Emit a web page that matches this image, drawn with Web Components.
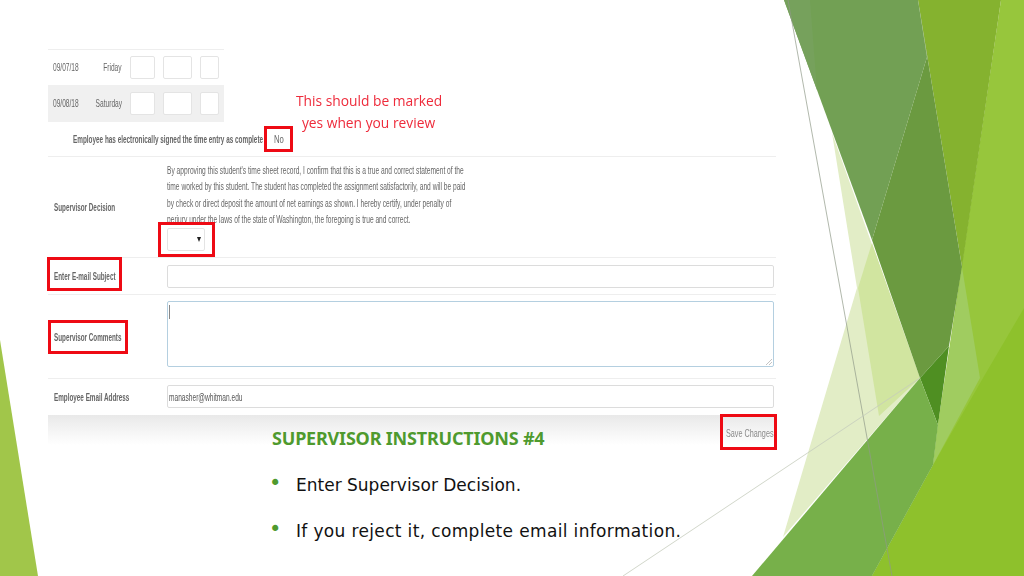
<!DOCTYPE html>
<html>
<head>
<meta charset="utf-8">
<style>
  html, body { margin: 0; padding: 0; background: #fff; }
</style>
</head>
<body>
<slide-page>
  <wisp-decor slot="decor"></wisp-decor>
  <form-shot>
    <time-table></time-table>
    <signed-row></signed-row>
    <form-row label="Supervisor Decision" height="101" pad="5">
      <decision-box></decision-box>
    </form-row>
    <form-row label="Enter E-mail Subject" height="37" pad="7">
      <text-box h="23"></text-box>
    </form-row>
    <form-row label="Supervisor Comments" height="84" pad="6">
      <text-box h="66" focus></text-box>
    </form-row>
    <form-row label="Employee Email Address" height="36" pad="6" last>
      <text-box h="23" value="manasher@whitman.edu"></text-box>
    </form-row>
    <form-foot></form-foot>
    <red-mark x="216" y="77" w="29" h="26"></red-mark>
    <red-mark x="110" y="173" w="57" h="35"></red-mark>
    <red-mark x="-1" y="208" w="75" h="34"></red-mark>
    <red-mark x="0" y="271" w="80" h="34"></red-mark>
    <red-mark x="672" y="365" w="57" h="36"></red-mark>
    <red-note></red-note>
  </form-shot>
  <slide-notes>
    <span slot="title">SUPERVISOR INSTRUCTIONS #4</span>
    <note-item>Enter Supervisor Decision.</note-item>
    <note-item style="letter-spacing: .35px">If you reject it, complete email information.</note-item>
  </slide-notes>
</slide-page>

<script>
// helper so every element has the same boilerplate
function shadow(el, html) {
  el.attachShadow({ mode: 'open' });
  el.shadowRoot.innerHTML = html;
}

// squeezed text, the pasted form picture is narrow and a bit blurry
const squeezed = `
  .sq { display: inline-block; white-space: nowrap; transform-origin: left center; transform: scaleX(var(--sq, .6)); }
`;

class SlidePage extends HTMLElement {
  connectedCallback() {
    shadow(this, `
      <style>
        :host { display: block; position: relative; width: 1024px; height: 576px; overflow: hidden; background: #fff;
                box-sizing: border-box; padding: 49px 0 0 48px; font-family: "Liberation Sans", sans-serif; }
        .content { position: relative; display: block; }
      </style>
      <slot name="decor"></slot>
      <div class="content"><slot></slot></div>
    `);
  }
}

class WispDecor extends HTMLElement {
  connectedCallback() {
    shadow(this, `
      <style>
        :host { display: block; position: absolute; left: 0; top: 0; width: 1024px; height: 576px; }
        svg { display: block; }
      </style>
      <svg width="1024" height="576" viewBox="0 0 1024 576">
        <polygon points="0,340 38,576 0,576" fill="#a1c64a"/>
        <polygon points="832,133 857,288 783,537 920,378" fill="#e2edc6"/>
        <polygon points="872,243 858,288 879,416 920,378 888,288" fill="#d1e5a0"/>
        <polygon points="1001,0 1024,0 1024,576 872,576 933,465 938,425" fill="#97c63c"/>
        <polygon points="1024,308 983,378 933,465 872,576 1024,576" fill="#8ec12c"/>
        <polygon points="918,0 1001,0 962,267" fill="#85b22f"/>
        <polygon points="784,0 918,0 927,57 872,240" fill="#72a054"/>
        <polygon points="784,0 810,0 817,90" fill="#76a15c"/>
        <polygon points="927,57 918,0 962,267 949,346 920,378 872,240" fill="#6b9a40"/>
        <polygon points="949,346 920,378 938,425" fill="#4f8f22"/>
        <polygon points="962,267 980,378 933,465 938,425" fill="#a0cc60"/>
        <polygon points="920,378 938,425 933,465 872,576 752,576" fill="#77b04a"/>
        <line x1="788" y1="0" x2="892" y2="576" stroke="#8f9a88" stroke-width=".7"/>
        <line x1="623" y1="576" x2="920" y2="378" stroke="#c5ccbd" stroke-width=".8"/>
      </svg>
    `);
  }
}

class FormShot extends HTMLElement {
  connectedCallback() {
    shadow(this, `
      <style>
        :host { display: block; position: relative; width: 728px; color: #666; font-size: 11px; }
        .blur { filter: blur(.35px); }
      </style>
      <div class="blur"><slot></slot></div>
    `);
  }
}

class TimeTable extends HTMLElement {
  connectedCallback() {
    const rows = [
      ['09/07/18', 'Friday', false],
      ['09/08/18', 'Saturday', true]
    ];
    shadow(this, `
      <style>
        ${squeezed}
        :host { display: block; width: 176px; border-top: 1px solid #eee; --sq: .6; }
        .row { display: grid; grid-template-columns: 32px 29px 25px 29px 19px; column-gap: 8px;
               align-items: center; height: 35px; padding-left: 5px; box-sizing: border-box; font-size: 11px; }
        .row.alt { background: #f0f0f0; height: 37px; }
        .txt { margin-top: -2px; }
        .day { display: flex; justify-content: flex-end; margin-left: -8px; }
        .day .sq { flex-shrink: 0; transform-origin: right center; }
        .cell { height: 23px; background: #fff; border: 1px solid #e4e4e4; border-radius: 2px; box-sizing: border-box; }
      </style>
      ${rows.map(r => `
        <div class="row ${r[2] ? 'alt' : ''}">
          <span class="txt"><span class="sq">${r[0]}</span></span>
          <span class="day txt"><span class="sq">${r[1]}</span></span>
          <span class="cell"></span><span class="cell"></span><span class="cell"></span>
        </div>`).join('')}
    `);
  }
}

class SignedRow extends HTMLElement {
  connectedCallback() {
    shadow(this, `
      <style>
        ${squeezed}
        :host { display: flex; align-items: center; height: 35px; box-sizing: border-box; padding: 0 0 0 25px;
                border-bottom: 1px solid #eee; font-size: 11px; --sq: .58; }
        .lab { width: 201px; font-weight: bold; white-space: nowrap; }
        .no { color: #666; --sq: .7; }
      </style>
      <span class="lab"><span class="sq">Employee has electronically signed the time entry as complete</span></span>
      <span class="no"><span class="sq">No</span></span>
    `);
  }
}

class FormRow extends HTMLElement {
  connectedCallback() {
    const h = this.getAttribute('height');
    const pad = this.getAttribute('pad') || 0;
    const last = this.hasAttribute('last');
    shadow(this, `
      <style>
        ${squeezed}
        :host { display: grid; grid-template-columns: 119px 607px; height: ${h}px; box-sizing: border-box;
                ${last ? '' : 'border-bottom: 1px solid #eee;'} --sq: .575; font-size: 11px; }
        .lab { font-weight: bold; padding-left: 6px; align-self: center; }
        .val { padding-top: ${pad}px; }
      </style>
      <span class="lab"><span class="sq">${this.getAttribute('label')}</span></span>
      <div class="val"><slot></slot></div>
    `);
  }
}

class DecisionBox extends HTMLElement {
  connectedCallback() {
    shadow(this, `
      <style>
        :host { display: block; }
        p { margin: 0; width: 300px; height: 66px; font-size: 11px; line-height: 16.4px; white-space: nowrap;
            transform-origin: left top; transform: scaleX(.604); }
        .select { width: 38px; height: 23px; box-sizing: border-box; border: 1px solid #e4e4e4; border-radius: 2px;
                  display: flex; align-items: center; justify-content: flex-end; padding-right: 3px; background: #fff; }
        .select svg { display: block; }
      </style>
      <p>By approving this student's time sheet record, I confirm that this is a true and correct statement of the<br>
      time worked by this student. The student has completed the assignment satisfactorily, and will be paid<br>
      by check or direct deposit the amount of net earnings as shown. I hereby certify, under penalty of<br>
      perjury under the laws of the state of Washington, the foregoing is true and correct.</p>
      <div class="select"><svg width="4" height="5" viewBox="0 0 4 5"><polygon points="0,0 4,0 2,5" fill="#222"/></svg></div>
    `);
  }
}

class TextBox extends HTMLElement {
  connectedCallback() {
    const focus = this.hasAttribute('focus');
    shadow(this, `
      <style>
        ${squeezed}
        :host { display: block; width: 607px; height: ${this.getAttribute('h')}px; box-sizing: border-box; background: #fff;
                border: 1px solid ${focus ? '#b4cfe0' : '#dcdcdc'}; border-radius: 2px; padding: 1px 0 0 1px; position: relative;
                line-height: 21px; font-size: 11px; --sq: .6; color: #555; }
        .caret { position: absolute; left: 1px; top: 3px; width: 1px; height: 14px; background: #888; }
        .grip { position: absolute; right: 1px; bottom: 1px; }
      </style>
      ${focus ? `<span class="caret"></span>
        <svg class="grip" width="6" height="6" viewBox="0 0 6 6"><path d="M0 6 6 0M3 6 6 3" stroke="#aaa" stroke-width=".7"/></svg>` : ''}
      <span class="sq">${this.getAttribute('value') || ''}</span>
    `);
  }
}

class FormFoot extends HTMLElement {
  connectedCallback() {
    shadow(this, `
      <style>
        ${squeezed}
        :host { display: flex; justify-content: flex-end; height: 30px; padding-right: 3px; box-sizing: border-box; padding-top: 12px;
                background: linear-gradient(#e9e9e9, #fff); font-size: 11.5px; --sq: .63; color: #8a8a8a; }
        span.wrap { width: 47px; white-space: nowrap; }
      </style>
      <span class="wrap"><span class="sq">Save Changes</span></span>
    `);
  }
}

// red rectangles somebody drew on top of the form picture
class RedMark extends HTMLElement {
  connectedCallback() {
    const a = n => this.getAttribute(n);
    shadow(this, `
      <style>
        :host { display: block; position: absolute; left: ${a('x')}px; top: ${a('y')}px; width: ${a('w')}px; height: ${a('h')}px;
                box-sizing: border-box; border: 3px solid #ee0a14; }
      </style>
    `);
  }
}

class RedNote extends HTMLElement {
  connectedCallback() {
    shadow(this, `
      <style>
        :host { display: block; position: absolute; left: 248px; top: 41px; width: 145px; text-align: center;
                font-family: "Open Sans", sans-serif; font-size: 13.8px; line-height: 22px; color: #ee2b3b; white-space: nowrap; }
      </style>
      This should be marked<br>yes when you review
    `);
  }
}

class SlideNotes extends HTMLElement {
  connectedCallback() {
    shadow(this, `
      <style>
        :host { display: block; position: relative; margin-top: -19px; padding-left: 224px; font-family: "DejaVu Sans", sans-serif; }
        .title { color: #4f9a2e; font-weight: bold; font-family: "Noto Sans", sans-serif; font-size: 18px; letter-spacing: -.2px;
                 line-height: 24px; height: 23px; white-space: nowrap; }
        .list { display: flex; flex-direction: column; gap: 24px; padding-top: 25px; }
      </style>
      <div class="title"><slot name="title"></slot></div>
      <div class="list"><slot></slot></div>
    `);
  }
}

class NoteItem extends HTMLElement {
  connectedCallback() {
    shadow(this, `
      <style>
        :host { display: flex; height: 22px; line-height: 22px; font-size: 17px; color: #111; white-space: nowrap; }
        .dot { width: 27px; margin-left: -3px; color: #4f9a2e; font-size: 21px; line-height: 18px; }
      </style>
      <span class="dot">•</span><slot></slot>
    `);
  }
}

customElements.define('slide-page', SlidePage);
customElements.define('wisp-decor', WispDecor);
customElements.define('form-shot', FormShot);
customElements.define('time-table', TimeTable);
customElements.define('signed-row', SignedRow);
customElements.define('form-row', FormRow);
customElements.define('decision-box', DecisionBox);
customElements.define('text-box', TextBox);
customElements.define('form-foot', FormFoot);
customElements.define('red-mark', RedMark);
customElements.define('red-note', RedNote);
customElements.define('slide-notes', SlideNotes);
customElements.define('note-item', NoteItem);
</script>
</body>
</html>
